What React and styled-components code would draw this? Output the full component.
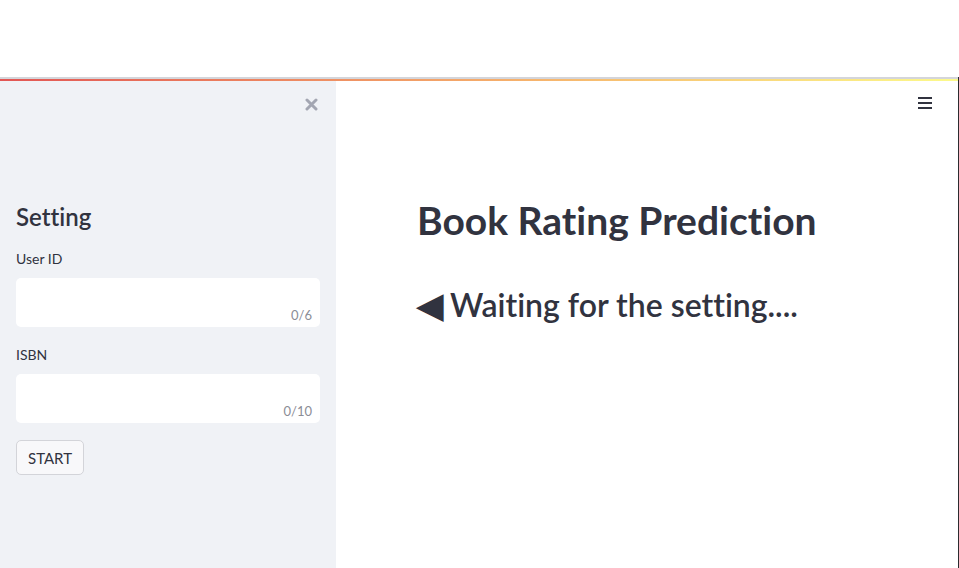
import React from "react";
import styled, { createGlobalStyle } from "styled-components";

const Global = createGlobalStyle`
  html, body { margin: 0; padding: 0; background: #ffffff; }
  body {
    font-family: Lato, "Open Sans", sans-serif;
    color: #31333f;
    font-variant-ligatures: none;
  }
  * { box-sizing: border-box; }
`;

const Page = styled.div`
  position: relative;
  width: 959px;
  height: 568px;
  display: flex;
  flex-direction: column;
  overflow: hidden;
`;

const TopSpace = styled.div`
  height: 77px;
  flex: none;
  background: #ffffff;
`;

const Frame = styled.div`
  flex: 1;
  display: flex;
  flex-direction: column;
  border-right: 1px solid #2b2b2f;
  min-height: 0;
`;

const GrayLine = styled.div`
  height: 2px;
  background: #d4d5da;
  flex: none;
`;

const Decoration = styled.div`
  height: 2px;
  flex: none;
  background: linear-gradient(90deg, rgb(226, 86, 84), rgb(246, 178, 108) 55%, rgb(252, 250, 140));
`;

const Body = styled.div`
  flex: 1;
  display: flex;
  min-height: 0;
`;

const Sidebar = styled.aside`
  width: 336px;
  flex: none;
  background: #f0f2f6;
  display: flex;
  flex-direction: column;
`;

const SidebarTop = styled.div`
  height: 46px;
  display: flex;
  align-items: center;
  justify-content: flex-end;
  padding-right: 18px;
`;

const IconButton = styled.button`
  border: none;
  background: transparent;
  padding: 0;
  width: 14px;
  height: 14px;
  display: flex;
  align-items: center;
  justify-content: center;
  cursor: pointer;
`;

const SidebarContent = styled.div`
  padding: 74px 16px 0 16px;
  display: flex;
  flex-direction: column;
`;

const SideTitle = styled.h2`
  margin: 0 0 15px 0;
  font-size: 24px;
  line-height: 32px;
  font-weight: 600;
  color: #31333f;
`;

const Field = styled.div`
  display: flex;
  flex-direction: column;
  margin-bottom: ${(p) => p.$gap}px;
`;

const Label = styled.label`
  font-size: 14px;
  line-height: 21px;
  margin-bottom: 9px;
  color: #31333f;
`;

const InputBox = styled.div`
  position: relative;
  height: 49px;
  background: #ffffff;
  border-radius: 5px;
`;

const Counter = styled.span`
  position: absolute;
  right: 8px;
  bottom: 4px;
  font-size: 13px;
  line-height: 16px;
  color: #8b8d96;
`;

const Button = styled.button`
  align-self: flex-start;
  height: 35px;
  padding: 0 11px;
  border: 1px solid #d3d4d9;
  border-radius: 5px;
  background: #f8f8fa;
  color: #31333f;
  font-family: inherit;
  font-size: 15px;
`;

const Main = styled.main`
  flex: 1;
  padding: 115px 80px 0 81px;
`;

const Title = styled.h1`
  margin: 0;
  font-size: 39px;
  line-height: 48px;
  font-weight: 700;
  color: #31333f;
  white-space: nowrap;
`;

const Subtitle = styled.h2`
  margin: 38px 0 0 0;
  font-size: 32px;
  line-height: 44px;
  font-weight: 600;
  color: #31333f;
  white-space: nowrap;
`;

const Arrow = styled.span`
  display: inline-block;
  font-size: 34px;
  margin-right: 7px;
`;

const MenuButton = styled(IconButton)`
  position: absolute;
  right: 27px;
  top: 96px;
`;

export default function App() {
  return (
    <Page>
      <Global />
      <TopSpace />
      <Frame>
        <GrayLine />
        <Decoration />
        <Body>
          <Sidebar>
            <SidebarTop>
              <IconButton aria-label="close">
                <svg width="13" height="13" viewBox="0 0 13 13">
                  <path d="M2 2 L11 11 M11 2 L2 11" stroke="#a3a6b2" strokeWidth="3" strokeLinecap="round" />
                </svg>
              </IconButton>
            </SidebarTop>
            <SidebarContent>
              <SideTitle>Setting</SideTitle>
              <Field $gap={17}>
                <Label>User ID</Label>
                <InputBox>
                  <Counter>0/6</Counter>
                </InputBox>
              </Field>
              <Field $gap={17}>
                <Label>ISBN</Label>
                <InputBox>
                  <Counter>0/10</Counter>
                </InputBox>
              </Field>
              <Button>START</Button>
            </SidebarContent>
          </Sidebar>
          <Main>
            <Title>Book Rating Prediction</Title>
            <Subtitle>
              <Arrow>◀</Arrow>Waiting for the setting....
            </Subtitle>
          </Main>
        </Body>
      </Frame>
      <MenuButton aria-label="menu">
        <svg width="14" height="14" viewBox="0 0 14 14">
          <rect x="0" y="1" width="14" height="2" fill="#31333f" />
          <rect x="0" y="6" width="14" height="2" fill="#31333f" />
          <rect x="0" y="11" width="14" height="2" fill="#31333f" />
        </svg>
      </MenuButton>
    </Page>
  );
}
